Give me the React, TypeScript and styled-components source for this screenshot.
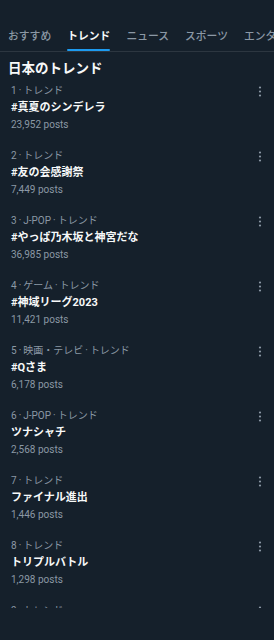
import React from 'react';
import styled, { createGlobalStyle } from 'styled-components';

type Trend = {
	rank: number;
	category?: string;
	title: string;
	posts: string;
};

const tabs = ['おすすめ', 'トレンド', 'ニュース', 'スポーツ', 'エンタメ'];

const trends: Trend[] = [
	{ rank: 1, title: '#真夏のシンデレラ', posts: '23,952' },
	{ rank: 2, title: '#友の会感謝祭', posts: '7,449' },
	{ rank: 3, category: 'J-POP', title: '#やっぱ乃木坂と神宮だな', posts: '36,985' },
	{ rank: 4, category: 'ゲーム', title: '#神域リーグ2023', posts: '11,421' },
	{ rank: 5, category: '映画・テレビ', title: '#Qさま', posts: '6,178' },
	{ rank: 6, category: 'J-POP', title: 'ツナシャチ', posts: '2,568' },
	{ rank: 7, title: 'ファイナル進出', posts: '1,446' },
	{ rank: 8, title: 'トリプルバトル', posts: '1,298' },
	{ rank: 9, title: 'ラストシーン', posts: '1,102' }
];

const GlobalStyle = createGlobalStyle`
	html, body {
		margin: 0;
		padding: 0;
		background: #15202b;
	}
	body {
		font-family: Roboto, "Noto Sans CJK JP", sans-serif;
		color: #f7f9f9;
	}
`;

const More: React.FC = () => (
	<svg width="4" height="11" viewBox="0 0 4 11" aria-hidden="true">
		<circle cx="2" cy="1.5" r="1.1" fill="#8b98a5" />
		<circle cx="2" cy="5.5" r="1.1" fill="#8b98a5" />
		<circle cx="2" cy="9.5" r="1.1" fill="#8b98a5" />
	</svg>
);

const TrendItem: React.FC<{ trend: Trend }> = ({ trend: { rank, category, title, posts } }) => (
	<Item>
		<MetaRow>
			<Meta>
				{rank}
				<Dot>·</Dot>
				{category ? (
					<>
						{category}
						<Dot>·</Dot>
					</>
				) : null}
				トレンド
			</Meta>
			<More />
		</MetaRow>
		<Title>{title}</Title>
		<Posts>{posts} posts</Posts>
	</Item>
);

export default function App() {
	return (
		<Page>
			<GlobalStyle />
			<TabBar>
				{tabs.map((t, i) => (
					<Tab key={t}>
						<TabLabel active={i === 1}>{t}</TabLabel>
						<TabIndicator active={i === 1} />
					</Tab>
				))}
			</TabBar>
			<Heading>日本のトレンド</Heading>
			<List>
				{trends.map((t) => (
					<TrendItem key={t.rank} trend={t} />
				))}
			</List>
		</Page>
	);
}

const Page = styled.div`
	width: 274px;
	height: 640px;
	overflow: hidden;
	background: #15202b;
`;

const TabBar = styled.nav`
	display: flex;
	gap: 16px;
	height: 51px;
	padding: 0 8px;
	align-items: flex-end;
	border-bottom: 1px solid #2c3640;
	overflow: hidden;
	white-space: nowrap;
`;

const Tab = styled.div`
	display: flex;
	flex-direction: column;
	align-items: stretch;
	flex-shrink: 0;
`;

const TabLabel = styled.span<{ active?: boolean }>`
	font-size: 10.8px;
	line-height: 16px;
	font-weight: ${({ active }) => (active ? 700 : 500)};
	color: ${({ active }) => (active ? '#f7f9f9' : '#8b98a5')};
`;

const TabIndicator = styled.div<{ active?: boolean }>`
	height: 2px;
	margin-top: 4px;
	border-radius: 1px;
	background: ${({ active }) => (active ? '#1d9bf0' : 'transparent')};
`;

const Heading = styled.h2`
	margin: 6px 0 0;
	padding: 0 8px;
	font-size: 13.5px;
	line-height: 20px;
	font-weight: 700;
	color: #f7f9f9;
`;

const List = styled.div`
	height: 530px;
	overflow: hidden;
`;

const Item = styled.div`
	height: 65px;
	box-sizing: border-box;
	padding: 6px 12px 0 11px;
`;

const MetaRow = styled.div`
	display: flex;
	justify-content: space-between;
	align-items: center;
	height: 14px;
`;

const Meta = styled.span`
	font-size: 10px;
	line-height: 14px;
	color: #8b98a5;
`;

const Dot = styled.span`
	margin: 0 2px;
`;

const Title = styled.div`
	font-size: 11px;
	line-height: 18px;
	padding-top: 1px;
	font-weight: 700;
	color: #f7f9f9;
`;

const Posts = styled.div`
	font-size: 10px;
	line-height: 16px;
	color: #8b98a5;
`;
